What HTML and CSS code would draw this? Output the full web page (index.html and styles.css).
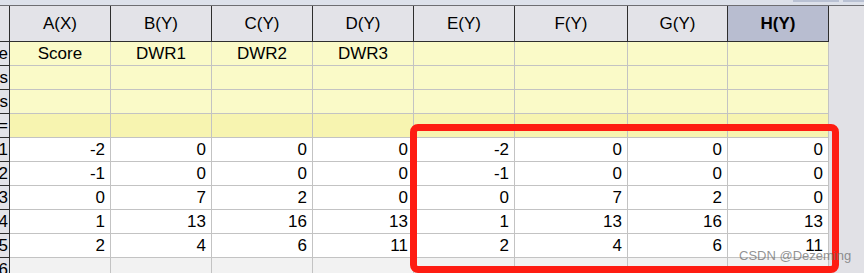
FILE: index.html
```html
<!DOCTYPE html>
<html lang="en">

<head>
    <meta charset="UTF-8" />
    <title>Worksheet</title>
    <link rel="stylesheet" href="styles.css">
</head>

<body>
    <div class="topbar"><span class="tab tab1"></span><span class="tab tab2"></span></div>

    <div class="page">
        <div class="sheet">
            <!-- column headers -->
            <div class="cell corner"></div>
            <div class="cell colhead">A(X)</div>
            <div class="cell colhead">B(Y)</div>
            <div class="cell colhead">C(Y)</div>
            <div class="cell colhead">D(Y)</div>
            <div class="cell colhead">E(Y)</div>
            <div class="cell colhead">F(Y)</div>
            <div class="cell colhead">G(Y)</div>
            <div class="cell colhead selected">H(Y)</div>

            <!-- label rows -->
            <div class="cell rowhead"><span>Long Name</span></div>
            <div class="cell meta">Score</div>
            <div class="cell meta">DWR1</div>
            <div class="cell meta">DWR2</div>
            <div class="cell meta">DWR3</div>
            <div class="cell meta"></div>
            <div class="cell meta"></div>
            <div class="cell meta"></div>
            <div class="cell meta"></div>

            <div class="cell rowhead"><span>Units</span></div>
            <div class="cell meta"></div><div class="cell meta"></div><div class="cell meta"></div><div class="cell meta"></div>
            <div class="cell meta"></div><div class="cell meta"></div><div class="cell meta"></div><div class="cell meta"></div>

            <div class="cell rowhead"><span>Comments</span></div>
            <div class="cell meta"></div><div class="cell meta"></div><div class="cell meta"></div><div class="cell meta"></div>
            <div class="cell meta"></div><div class="cell meta"></div><div class="cell meta"></div><div class="cell meta"></div>

            <div class="cell rowhead"><span>F(x)=</span></div>
            <div class="cell meta fx"></div><div class="cell meta fx"></div><div class="cell meta fx"></div><div class="cell meta fx"></div>
            <div class="cell meta fx"></div><div class="cell meta fx"></div><div class="cell meta fx"></div><div class="cell meta fx"></div>

            <!-- data rows -->
            <div class="cell rowhead"><span>1</span></div>
            <div class="cell num">-2</div><div class="cell num">0</div><div class="cell num">0</div><div class="cell num">0</div>
            <div class="cell num">-2</div><div class="cell num">0</div><div class="cell num">0</div><div class="cell num">0</div>

            <div class="cell rowhead"><span>2</span></div>
            <div class="cell num">-1</div><div class="cell num">0</div><div class="cell num">0</div><div class="cell num">0</div>
            <div class="cell num">-1</div><div class="cell num">0</div><div class="cell num">0</div><div class="cell num">0</div>

            <div class="cell rowhead"><span>3</span></div>
            <div class="cell num">0</div><div class="cell num">7</div><div class="cell num">2</div><div class="cell num">0</div>
            <div class="cell num">0</div><div class="cell num">7</div><div class="cell num">2</div><div class="cell num">0</div>

            <div class="cell rowhead"><span>4</span></div>
            <div class="cell num">1</div><div class="cell num">13</div><div class="cell num">16</div><div class="cell num">13</div>
            <div class="cell num">1</div><div class="cell num">13</div><div class="cell num">16</div><div class="cell num">13</div>

            <div class="cell rowhead"><span>5</span></div>
            <div class="cell num">2</div><div class="cell num">4</div><div class="cell num">6</div><div class="cell num">11</div>
            <div class="cell num">2</div><div class="cell num">4</div><div class="cell num">6</div><div class="cell num">11</div>

            <div class="cell rowhead"><span>6</span></div>
            <div class="cell empty"></div><div class="cell empty"></div><div class="cell empty"></div><div class="cell empty"></div>
            <div class="cell empty"></div><div class="cell empty"></div><div class="cell empty"></div><div class="cell empty"></div>
        </div>
        <div class="side"></div>
    </div>

    <!-- annotation overlay -->
    <div class="highlight"></div>
    <div class="watermark">CSDN @Dezeming</div>
</body>

</html>
```

FILE: styles.css
```css
body {
    margin: 0;
    font-family: "Liberation Sans", Arial, sans-serif;
    font-size: 17px;
    color: #000;
    background: #e1e1e6;
    overflow: hidden;
}

.topbar {
    height: 5px;
    background: #dde1ea;
    border-bottom: 1px solid #6e6e72;
    position: relative;
}

.tab {
    position: absolute;
    top: 0;
    height: 2px;
    background: #b9c1d3;
}

.tab1 {
    left: 793px;
    width: 46px;
}

.tab2 {
    left: 843px;
    width: 21px;
}

.page {
    display: flex;
}

.sheet {
    display: grid;
    grid-template-columns: 10px 101px 101px 101px 101px 101px 113px 100px 101px;
    grid-template-rows: 36px repeat(10, 24px);
    background: #fff;
}

.cell {
    box-sizing: border-box;
    border-right: 1px solid #c3c3c3;
    border-bottom: 1px solid #c3c3c3;
    display: flex;
    align-items: center;
    overflow: hidden;
    white-space: nowrap;
}

.corner,
.colhead {
    background: #e3e3e8;
    border-right-color: #2e2e2e;
    border-bottom-color: #2e2e2e;
    justify-content: center;
}

.colhead.selected {
    background: #b8bdd0;
    font-weight: bold;
}

.rowhead {
    background: #e3e3e8;
    border-right-color: #2e2e2e;
    border-bottom-color: #2e2e2e;
    justify-content: flex-end;
}

.rowhead span {
    flex-shrink: 0;
    margin-right: 1px;
}

.meta {
    background: #fafac8;
    justify-content: center;
}

.meta.fx {
    background: #f7f4b0;
}

.num {
    justify-content: flex-end;
    padding-right: 5px;
}

.empty {
    background: #f2f2f2;
}

.side {
    flex: 1;
    background: #e1e1e6;
}

.highlight {
    position: absolute;
    left: 410px;
    top: 124px;
    width: 429px;
    height: 149px;
    box-sizing: border-box;
    border: 7px solid #fe1c12;
    border-radius: 8px;
}

.watermark {
    position: absolute;
    left: 739px;
    top: 248px;
    white-space: nowrap;
    font-size: 13px;
    color: rgba(110, 110, 110, 0.75);
}
```
